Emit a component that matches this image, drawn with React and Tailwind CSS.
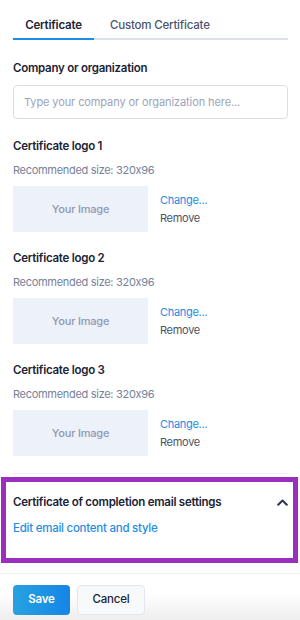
import React from "react";

const font = { fontFamily: "Inter, 'Noto Sans', sans-serif", fontFeatureSettings: "'calt' 0" };

function LogoSection({ n }) {
  return (
    <div className="flex flex-col">
      <div className="text-[11.5px] leading-[16px] font-semibold tracking-[-0.25px] text-[#1b2336]">Certificate logo {n}</div>
      <div className="mt-[8px] text-[11px] leading-[16px] tracking-[-0.3px] text-[#76819a]">Recommended size: 320x96</div>
      <div className="mt-[8px] flex items-center">
        <div className="w-[135px] h-[46px] bg-[#ecf1fa] flex items-center justify-center text-[11px] font-medium tracking-[-0.2px] text-[#8f99b0]">
          Your Image
        </div>
        <div className="ml-[12px] flex flex-col gap-[2px] pb-[1px]">
          <span className="text-[11px] leading-[16px] tracking-[-0.3px] text-[#1e8ce6]">Change...</span>
          <span className="text-[11px] leading-[16px] tracking-[-0.3px] text-[#4b5263]">Remove</span>
        </div>
      </div>
    </div>
  );
}

export default function App() {
  return (
    <div className="w-[300px] h-[620px] bg-white overflow-hidden flex flex-col" style={font}>
      <div className="px-[13px] pr-[12px]">
        <div className="flex border-b-2 border-[#dbe1ec]">
          <div className="-mb-[2px] w-[81px] pt-[17px] pb-[5px] border-b-2 border-[#1a8ee8] text-center text-[11.5px] leading-[16px] font-semibold tracking-[-0.2px] text-[#1b2336]">
            Certificate
          </div>
          <div className="-mb-[2px] pl-[16px] pt-[17px] pb-[5px] text-[11.5px] leading-[16px] font-medium tracking-[-0.2px] text-[#4a5572]">
            Custom Certificate
          </div>
        </div>

        <div className="mt-[20px] text-[11.5px] leading-[16px] font-semibold tracking-[-0.25px] text-[#1b2336]">Company or organization</div>
        <div className="mt-[9px] h-[34px] rounded-[4px] border border-[#d9dee8] flex items-center px-[10px] text-[11px] tracking-[-0.1px] text-[#9aa4ba]">
          Type your company or organization here...
        </div>

        <div className="mt-[19px] flex flex-col gap-[18px]">
          <LogoSection n={1} />
          <LogoSection n={2} />
          <LogoSection n={3} />
        </div>

        <div className="mt-[17px] h-px bg-[#eeeef5]"></div>
      </div>

      <div className="mt-[3px] ml-[1px] mr-[2px] border-[5px] border-[#9b2dbf] pl-[7px] pr-[5px] pt-[12px] pb-[22px]">
        <div className="flex items-center justify-between">
          <span className="text-[11.5px] leading-[16px] font-semibold tracking-[-0.25px] text-[#1b2336]">Certificate of completion email settings</span>
          <svg width="11" height="7" viewBox="0 0 11 7" fill="none">
            <path d="M1.2 5.8 L5.5 1.5 L9.8 5.8" stroke="#2c3652" strokeWidth="2" strokeLinecap="round" strokeLinejoin="round" />
          </svg>
        </div>
        <div className="mt-[10px] text-[11.5px] leading-[16px] font-medium tracking-[-0.25px] text-[#1e8ce6]">Edit email content and style</div>
      </div>

      <div className="mt-[10px] h-px bg-[#f0f1f4]"></div>

      <div className="flex-1 flex items-start gap-[7px] px-[13px] pt-[11px] bg-[linear-gradient(to_bottom,#ffffff_0%,#ffffff_40%,#eeeeee_100%)]">
        <button className="w-[57px] h-[30px] rounded-[4px] bg-[linear-gradient(to_right,#27a2e0,#1585e6)] text-white text-[11.5px] font-semibold tracking-[-0.2px]">
          Save
        </button>
        <button className="w-[68px] h-[30px] rounded-[4px] border border-[#e2e6ee] bg-[#f8f9fb] text-[#1b2336] text-[11.5px] font-medium tracking-[-0.2px]">
          Cancel
        </button>
      </div>
    </div>
  );
}
